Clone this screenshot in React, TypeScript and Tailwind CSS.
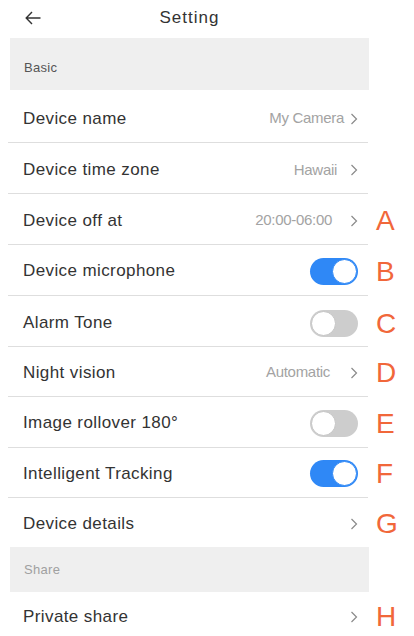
import { ReactNode } from "react";

const font = { fontFamily: '"Liberation Sans", Arial, sans-serif' };

function Chevron() {
  return (
    <svg width="8" height="12" viewBox="0 0 8 12" className="shrink-0">
      <path d="M1.5 1 L6.5 6 L1.5 11" fill="none" stroke="#8a8a8a" strokeWidth="1.2" />
    </svg>
  );
}

function Toggle({ on }: { on: boolean }) {
  return on ? (
    <div className="w-[48px] h-[27px] rounded-full bg-[#2f88f6] flex items-center justify-end pr-[1px]">
      <div className="w-[25px] h-[25px] rounded-full bg-white border border-[#2f88f6]" />
    </div>
  ) : (
    <div className="w-[48px] h-[27px] rounded-full bg-[#cdcdcd] flex items-center pl-[1px]">
      <div className="w-[25px] h-[25px] rounded-full bg-white border border-[#c4c4c4]" />
    </div>
  );
}

function Row({
  label,
  h,
  letter,
  children,
  border = true,
  pt = "pt-[2px]",
}: {
  label: string;
  h: string;
  letter?: string;
  children?: ReactNode;
  border?: boolean;
  pt?: string;
}) {
  return (
    <div className={`flex items-center ${h}`}>
      <div
        className={`ml-[8px] w-[360px] h-full flex items-center justify-between pl-[15px] pr-[10px] ${pt} ${
          border ? "border-b border-[#dedede]" : ""
        }`}
      >
        <span className="text-[17px] text-[#333] tracking-[0.4px]">{label}</span>
        <div className="flex items-center">{children}</div>
      </div>
      <span className={`ml-[8px] text-[28px] leading-none text-[#f1673a] ${pt}`}>{letter}</span>
    </div>
  );
}

function Value({ text, gap = "mr-[13px]" }: { text: string; gap?: string }) {
  return (
    <>
      <span className={`text-[15px] text-[#a3a3a3] tracking-[-0.3px] ${gap}`}>{text}</span>
      <Chevron />
    </>
  );
}

export default function App() {
  return (
    <div className="w-[414px] h-[636px] overflow-hidden bg-white" style={font}>
      <div className="h-[38px] relative flex items-center justify-center">
        <svg width="16" height="14" viewBox="0 0 16 14" className="absolute left-[25px] top-[11px]">
          <path d="M7 1 L1.2 7 L7 13 M1.2 7 H15.5" fill="none" stroke="#333" strokeWidth="1.4" />
        </svg>
        <span className="text-[17px] text-[#333] tracking-[1px] -mt-[3px] mr-[35px]">Setting</span>
      </div>

      <div className="ml-[10px] w-[359px] h-[52px] bg-[#efefef] flex items-center pl-[14px] pt-[7px]">
        <span className="text-[13px] text-[#555] tracking-[0.3px]">Basic</span>
      </div>

      <Row label="Device name" h="h-[53px]" pt="pt-[5px]">
        <Value text="My Camera" gap="mr-[6px]" />
      </Row>
      <Row label="Device time zone" h="h-[51px]" pt="pt-[4px]">
        <Value text="Hawaii" />
      </Row>
      <Row label="Device off at" h="h-[51px]" letter="A" pt="pt-[3px]">
        <Value text="20:00-06:00" gap="mr-[18px]" />
      </Row>
      <Row label="Device microphone" h="h-[51px]" letter="B">
        <Toggle on />
      </Row>
      <Row label="Alarm Tone" h="h-[51px]" letter="C" pt="pt-[4px]">
        <Toggle on={false} />
      </Row>
      <Row label="Night vision" h="h-[50px]" letter="D">
        <Value text="Automatic" gap="mr-[20px]" />
      </Row>
      <Row label="Image rollover 180°" h="h-[51px]" letter="E">
        <Toggle on={false} />
      </Row>
      <Row label="Intelligent Tracking" h="h-[50px]" letter="F">
        <Toggle on />
      </Row>
      <Row label="Device details" h="h-[49px]" letter="G" border={false}>
        <Chevron />
      </Row>

      <div className="ml-[10px] w-[359px] h-[45px] bg-[#efefef] flex items-center pl-[14px]">
        <span className="text-[13px] text-[#a0a0a0] tracking-[0.3px]">Share</span>
      </div>

      <Row label="Private share" h="h-[48px]" letter="H" border={false}>
        <Chevron />
      </Row>
    </div>
  );
}
